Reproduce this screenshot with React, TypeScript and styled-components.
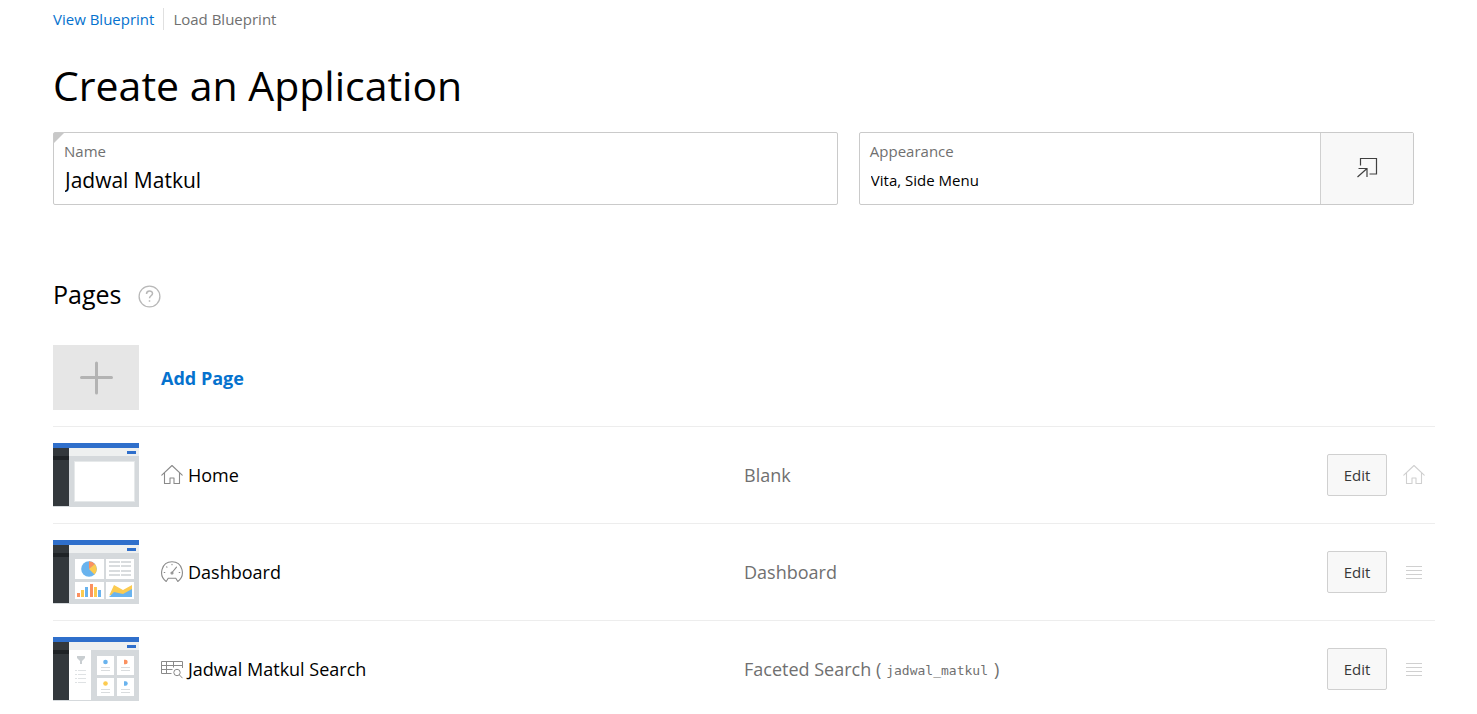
import React from 'react';
import styled, { createGlobalStyle } from 'styled-components';

const GlobalStyle = createGlobalStyle`
  *, *::before, *::after { box-sizing: border-box; }
  body {
    margin: 0;
    background: #fff;
    color: #000;
    font-family: 'Open Sans', 'Noto Sans', sans-serif;
    font-size: 15px;
    line-height: 22px;
  }
  button, input { font: inherit; color: inherit; }
`;

const Page = styled.main`
  padding: 8px 42px 12px 53px;
`;

const LinkBar = styled.nav`
  display: flex;
  align-items: center;
  height: 22px;
`;

const BarLink = styled.a<{ $muted?: boolean }>`
  color: ${(p) => (p.$muted ? '#707070' : '#0572ce')};
  text-decoration: none;
  & + & {
    margin-left: 9px;
    padding-left: 9px;
    border-left: 1px solid #e0e0e0;
  }
`;

const Title = styled.h1`
  margin: 27px 0 19px;
  font-size: 41px;
  line-height: 56px;
  font-weight: 400;
`;

const Fields = styled.div`
  display: grid;
  grid-template-columns: 41fr 29fr;
  gap: 21px;
  margin-right: 21px;
`;

const Field = styled.div`
  position: relative;
  display: flex;
  height: 73px;
  border: 1px solid #cacaca;
  border-radius: 2px;
`;

const RequiredMark = styled.span`
  position: absolute;
  top: 0;
  left: 0;
  border-top: 10px solid #c8c8c8;
  border-right: 10px solid transparent;
`;

const FieldText = styled.div`
  display: flex;
  flex: 1;
  flex-direction: column;
  min-width: 0;
  padding: 7px 10px;
`;

const FieldLabel = styled.label`
  color: #707070;
`;

const TextInput = styled.input<{ $large?: boolean }>`
  width: 100%;
  height: 35px;
  padding: 0 1px;
  border: 0;
  outline: 0;
  background: transparent;
  font-size: ${(p) => (p.$large ? 21 : 15)}px;
`;

const PickerButton = styled.button`
  display: grid;
  place-items: center;
  width: 93px;
  padding: 0 0 2px;
  border: 0;
  border-left: 1px solid #d0d0d0;
  background: #f8f8f8;
  color: #404040;
`;

const SectionHeader = styled.header`
  display: flex;
  align-items: center;
  gap: 17px;
  margin: 71px 0 33px;
`;

const SectionTitle = styled.h2`
  margin: 0;
  font-size: 25px;
  line-height: 36px;
  font-weight: 400;
`;

const HelpButton = styled.button`
  display: flex;
  padding: 4px 0 0;
  border: 0;
  background: transparent;
  color: #b8b8b8;
`;

const PageList = styled.ul`
  margin: 0;
  padding: 0;
  list-style: none;
`;

const Row = styled.li`
  display: grid;
  grid-template-columns: 108px 1fr 1fr 108px;
  align-items: center;
  padding: 16px 0;
  font-size: 18px;
  line-height: 24px;
  & + & { border-top: 1px solid #ededed; }
  &:first-child { padding-top: 0; }
`;

const AddTile = styled.button`
  display: grid;
  place-items: center;
  width: 86px;
  height: 65px;
  padding: 0;
  border: 0;
  background: #e6e6e6;
`;

const AddLink = styled.a`
  color: #0572ce;
  font-weight: 700;
  text-decoration: none;
`;

const PageName = styled.div`
  display: flex;
  align-items: center;
  gap: 5px;
  svg { color: #8a8a8a; }
`;

const PageKind = styled.div`
  color: #707070;
`;

const TableName = styled.code`
  padding: 0 6px 0 5px;
  vertical-align: 1px;
  font-family: 'DejaVu Sans Mono', monospace;
  font-size: 13px;
  line-height: 16px;
`;

const Actions = styled.div`
  display: flex;
  align-items: center;
  gap: 16px;
  color: #d0d0d0;
`;

const EditButton = styled.button`
  width: 60px;
  height: 42px;
  padding: 0;
  border: 1px solid #d0d0d0;
  border-radius: 2px;
  background: #f8f8f8;
  color: #383838;
  font-size: 15px;
`;

const HomeIcon = () => (
  <svg width="22" height="22" viewBox="0 0 22 22" fill="none" stroke="currentColor" strokeWidth="1.1" strokeLinejoin="round" strokeLinecap="round">
    <path d="M.8 11.2 11 1.5l10.200 9.700M3.500 9v10.500H9V14h4v5.500h5.500V9" />
  </svg>
);

const GaugeIcon = () => (
  <svg width="22" height="22" viewBox="0 0 22 22" fill="none" stroke="currentColor" strokeWidth="1.1" strokeLinejoin="round" strokeLinecap="round">
    <path d="M5.200 20.500C-3 14.500.500.800 11 .800S25 14.500 16.800 20.500l-2-3.200H7.200Z" />
    <path d="M11.500 11 15.500 6.200M11 3.200v.6M3.200 11.500h.600M18.200 11.500h.600M5.600 5.800l.4.400" />
    <circle cx="11" cy="12" r="1" />
  </svg>
);

const TableSearchIcon = () => (
  <svg width="22" height="22" viewBox="0 0 22 22" fill="none" stroke="currentColor" strokeWidth="1">
    <path d="M10.500 15.500H.500v-12h21v6.500M.500 7.500h21M.500 11.500h11M5.500 3.500v12M12.500 3.500v6" />
    <circle cx="16" cy="14.500" r="3.200" />
    <path d="m18.300 16.800 3.200 3.400" />
  </svg>
);

const DragIcon = () => (
  <svg width="22" height="22" viewBox="0 0 22 22" stroke="currentColor">
    <path d="M3 5.500h16M3 9.500h16M3 13.500h16M3 17.500h16" />
  </svg>
);

const HelpIcon = () => (
  <svg width="23" height="23" viewBox="0 0 23 23" fill="none" stroke="currentColor" strokeWidth="1.3">
    <circle cx="11.500" cy="11.500" r="10.400" />
    <path d="M8.500 9c0-4 6-4 6-.500 0 2.300-3 2.200-3 4.800M11.500 15.300v1.500" strokeWidth="1.500" />
  </svg>
);

const PickerIcon = () => (
  <svg width="22" height="22" viewBox="0 0 22 22" fill="none" stroke="currentColor" strokeWidth="1.200">
    <path d="M4.500 8.500v-7h16v15.500h-7M2.500 11.500h8.500v8.500M11 11.500l-9.500 8.500" />
  </svg>
);

const PlusIcon = () => (
  <svg width="34" height="34" viewBox="0 0 34 34" stroke="#b3b3b3" strokeWidth="3" strokeLinecap="round">
    <path d="M17.500 2v30M2.500 16.500h30" />
  </svg>
);

const Frame = ({ children }: { children: React.ReactNode }) => (
  <svg width="86" height="64" viewBox="0 0 86 64" aria-hidden="true">
    <path fill="#d5d9dc" d="M0 0h86v64H0z" />
    <path fill="#eef0f0" d="M16 5h70v8H16z" />
    <path fill="#33383c" d="M0 5h16v58H0z" />
    <path fill="#1f2326" d="M0 13h16v4H0z" />
    <path fill="#2f6fcb" d="M0 0h86v5H0zM74 8h9v3h-9z" />
    {children}
  </svg>
);

const BlankThumb = () => (
  <Frame>
    <path fill="#fff" stroke="#e6e9ea" d="M21.500 18.500h60v40h-60z" />
  </Frame>
);

const DashboardThumb = () => (
  <Frame>
    <path fill="#fff" d="M22 19h29v20H22zM53 19h28v20H53zM22 42h29v17H22zM53 42h28v17H53z" />
    <circle cx="36" cy="29" r="7.800" fill="#69b3ee" />
    <path fill="#fb9160" d="M36 29v-7.800a7.800 7.800 0 0 1 6 3z" />
    <path fill="#fccb50" d="m36 29 6-5a7.800 7.800 0 0 1-.5 10.500z" />
    <path stroke="#d9dcde" strokeWidth="2" d="M56 22h11M56 26h11M56 31h11M56 35h11M68 22h10M68 26h10M68 31h10M68 35h10" />
    <path fill="#fb9160" d="M24 53h3v4h-3zM37 44h3v13h-3z" />
    <path fill="#fccb50" d="M28 50h3v7h-3zM41 47h3v10h-3z" />
    <path fill="#69b3ee" d="M32 47h3v10h-3zM45 50h3v7h-3z" />
    <path fill="#fccb50" d="m56 56 5-11 9 5 9-5v10H56z" />
    <path fill="#69b3ee" d="m56 57 5-5 9 2 9-5v8z" />
  </Frame>
);

const FacetedThumb = () => (
  <Frame>
    <path fill="#fff" d="M16 13h22v50H16zM44 19h17v19H44zM64 19h17v19H64zM44 41h17v18H44zM64 41h17v18H64z" />
    <path fill="#c9ced1" d="M24 19h8v2l-3 3v3h-2v-3l-3-3z" />
    <path stroke="#dfe2e4" d="M22 33.500h2M25 33.500h8M22 37.500h2M25 37.500h8M22 41.500h2M25 41.500h8M22 45.500h2M25 45.500h8" />
    <path stroke="#d9dcde" d="M48 30.500h9M48 33.500h9M68 30.500h9M68 33.500h9M48 52.500h9M48 55.500h9M68 52.500h9M68 55.500h9" />
    <circle cx="52.500" cy="25" r="2.300" fill="#69b3ee" />
    <path fill="#fb9160" d="M71 22.800h1.500a2.200 2.200 0 0 1 0 4.400H71z" />
    <circle cx="52.500" cy="46.500" r="2.300" fill="#fccb50" />
    <path fill="#69b3ee" d="M71 44.300h1.500a2.200 2.200 0 0 1 0 4.400H71z" />
  </Frame>
);

const pages = [
  { name: 'Home', kind: 'Blank', Thumb: BlankThumb, Icon: HomeIcon, Handle: HomeIcon },
  { name: 'Dashboard', kind: 'Dashboard', Thumb: DashboardThumb, Icon: GaugeIcon, Handle: DragIcon },
  { name: 'Jadwal Matkul Search', kind: 'Faceted Search', table: 'jadwal_matkul', Thumb: FacetedThumb, Icon: TableSearchIcon, Handle: DragIcon },
];

export default function App() {
  return (
    <>
      <GlobalStyle />
      <Page>
        <LinkBar>
          <BarLink href="#view">View Blueprint</BarLink>
          <BarLink href="#load" $muted>Load Blueprint</BarLink>
        </LinkBar>
        <Title>Create an Application</Title>
        <Fields>
          <Field>
            <RequiredMark />
            <FieldText>
              <FieldLabel htmlFor="name">Name</FieldLabel>
              <TextInput id="name" $large defaultValue="Jadwal Matkul" />
            </FieldText>
          </Field>
          <Field>
            <FieldText>
              <FieldLabel htmlFor="appearance">Appearance</FieldLabel>
              <TextInput id="appearance" readOnly value="Vita, Side Menu" />
            </FieldText>
            <PickerButton type="button" aria-label="Set Appearance"><PickerIcon /></PickerButton>
          </Field>
        </Fields>
        <SectionHeader>
          <SectionTitle>Pages</SectionTitle>
          <HelpButton type="button" aria-label="Help"><HelpIcon /></HelpButton>
        </SectionHeader>
        <PageList>
          <Row>
            <AddTile type="button" aria-label="Add Page"><PlusIcon /></AddTile>
            <AddLink href="#add">Add Page</AddLink>
          </Row>
          {pages.map(({ name, kind, table, Thumb, Icon, Handle }) => (
            <Row key={name}>
              <Thumb />
              <PageName><Icon />{name}</PageName>
              <PageKind>{kind}{table && <> (<TableName>{table}</TableName>)</>}</PageKind>
              <Actions>
                <EditButton type="button">Edit</EditButton>
                <Handle />
              </Actions>
            </Row>
          ))}
        </PageList>
      </Page>
    </>
  );
}
